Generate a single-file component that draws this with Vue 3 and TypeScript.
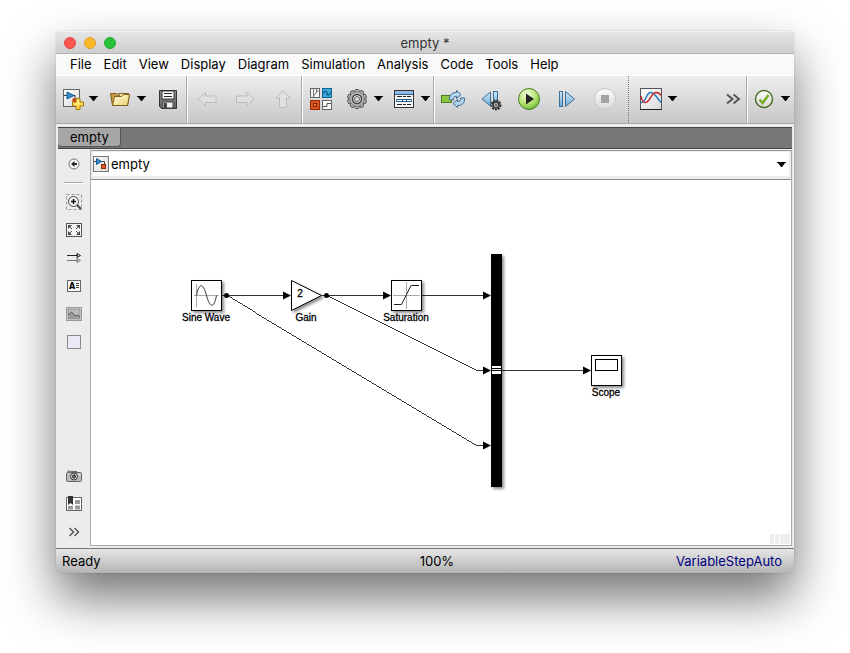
<script setup lang="ts">
import { ref } from 'vue'

const modelName = 'empty'
const menus: string[] = ['File', 'Edit', 'View', 'Display', 'Diagram', 'Simulation', 'Analysis', 'Code', 'Tools', 'Help']

interface Signal {
  id: string
  path: string
  tip: [number, number]
}

const signals: Signal[] = [
  { id: 'sine-gain', path: 'M131 115.5H194', tip: [200, 115.5] },
  { id: 'gain-sat', path: 'M231 115.5H294', tip: [300, 115.5] },
  { id: 'sat-mux', path: 'M331 115.5H394', tip: [400, 115.5] },
  { id: 'gain-mux', path: 'M235.5 115.5L385.5 190.5H394', tip: [400, 190.5] },
  { id: 'sine-mux', path: 'M135.5 115.5L385.5 265.5H394', tip: [400, 265.5] },
  { id: 'mux-scope', path: 'M411 190.5H494', tip: [500, 190.5] },
]

const branches: [number, number][] = [[135.5, 115.5], [235.5, 115.5]]

const labels = [
  { text: 'Sine Wave', x: 115, y: 141 },
  { text: 'Gain', x: 215, y: 141 },
  { text: 'Saturation', x: 315, y: 141 },
  { text: 'Scope', x: 515, y: 216 },
]

const gearTeeth = [0, 36, 72, 108, 144, 180, 216, 252, 288, 324]
const zoom = ref('100%')
</script>

<template>
  <div class="desktop">
    <main class="window">
      <header class="titlebar">
        <div class="lights">
          <button class="light close" aria-label="Close"></button>
          <button class="light minimize" aria-label="Minimize"></button>
          <button class="light zoomer" aria-label="Zoom"></button>
        </div>
        <h1>{{ modelName }} *</h1>
      </header>

      <nav class="menubar">
        <button v-for="menu in menus" :key="menu">{{ menu }}</button>
      </nav>

      <div class="toolbar">
        <div class="group files">
          <div class="split">
            <button class="tool" aria-label="New model">
              <svg viewBox="0 0 24 24">
                <rect x="3.5" y="2.5" width="16" height="17" fill="url(#paper)" stroke="#666" />
                <path d="M4 8.5h4M13 8.5h2v4" stroke="#333" fill="none" />
                <path d="M7 5l7 3.500-7 3.500z" fill="#2f8fd0" stroke="#155a91" />
                <rect x="12.500" y="11.500" width="4" height="4" fill="#c33b12" />
                <path d="M16 11.500h4v3.500h3.500v4H20v3.500h-4V19h-3.500v-4H16z" fill="#ffd64a" stroke="#a87910" />
                <path d="M17 13h1.500v4h-4.500" stroke="#fff3b0" fill="none" />
              </svg>
            </button>
            <button class="drop" aria-label="New options"><svg viewBox="0 0 9 5"><path d="M0 0h9v1H8L5 5H4L1 1H0z" /></svg></button>
          </div>
          <div class="split">
            <button class="tool" aria-label="Open">
              <svg viewBox="0 0 24 24">
                <path d="M2.500 6.500h6l1.500 2h9.500v10H4.500z" fill="#c79a45" stroke="#80601e" />
                <path d="M10.500 6.500h10l1 1-2 11h-4z" fill="#f5e6a8" stroke="#80601e" />
                <path d="M6.500 9.500h7l2-2h6l-2 11h-15z" fill="url(#folder)" stroke="#80601e" />
              </svg>
            </button>
            <button class="drop" aria-label="Open options"><svg viewBox="0 0 9 5"><path d="M0 0h9v1H8L5 5H4L1 1H0z" /></svg></button>
          </div>
          <button class="tool" aria-label="Save">
            <svg viewBox="0 0 24 24">
              <path d="M3.500 3.500h17v18h-15l-2-2z" fill="url(#steel)" stroke="#333" />
              <rect x="6" y="4" width="12" height="8" fill="#fff" stroke="#333" />
              <path d="M8 6.500h8M8 9.500h8" stroke="#222" />
              <rect x="7" y="15" width="10" height="6" fill="#f3f3f3" stroke="#444" />
              <rect x="8" y="16" width="3" height="5" fill="#444" />
            </svg>
          </button>
        </div>

        <div class="group arrows">
          <button class="tool" disabled aria-label="Back">
            <svg viewBox="0 0 24 24"><path class="faint" d="M3.500 12l7-6.500V9h10.500v6.500H10.500V19z" /></svg>
          </button>
          <button class="tool" disabled aria-label="Forward">
            <svg viewBox="0 0 24 24"><path class="faint" d="M21 12l-7-6.500V9H3.500v6.500H14V19z" /></svg>
          </button>
          <button class="tool" disabled aria-label="Up to parent">
            <svg viewBox="0 0 24 24"><path class="faint" d="M12 3.500l7 7.500h-3.500v9.500h-7V11H5z" /></svg>
          </button>
        </div>

        <div class="group model">
          <button class="tool wide" aria-label="Library browser">
            <svg viewBox="0 0 24 24">
              <rect x="1.500" y="1.500" width="9" height="9" fill="#f4f4f4" stroke="#666" />
              <path d="M4.500 2v8M4.500 9l5-6M7.500 6V2" stroke="#777" fill="none" />
              <rect x="13.500" y="1.500" width="9" height="9" fill="#35a8dd" stroke="#17648c" />
              <path d="M14 7l2-3 2 1v3h2l2-3" stroke="#0b4d72" fill="none" />
              <rect x="1.500" y="13.500" width="9" height="9" fill="#df5517" stroke="#8d3009" />
              <rect x="4.500" y="16.500" width="3" height="3" fill="#f07a3c" stroke="#7c2806" />
              <rect x="13.500" y="13.500" width="9" height="9" fill="#fafafa" stroke="#666" />
              <path d="M14 19.500h4v-3h4" stroke="#555" fill="none" />
            </svg>
          </button>
          <div class="split">
            <button class="tool" aria-label="Model configuration">
              <svg viewBox="0 0 24 24">
                <rect v-for="a in gearTeeth" :key="a" x="10" y="2.500" width="4" height="4" rx="1" fill="#c4c4c4" stroke="#555" :transform="`rotate(${a} 12 12)`" />
                <circle cx="12" cy="12" r="7.500" fill="#b4b4b4" stroke="#777" />
                <circle cx="12" cy="12" r="4.500" fill="#e4e4e4" stroke="#444" stroke-width="1.500" />
                <circle cx="12" cy="12" r="2.500" fill="#ddd" stroke="#666" />
              </svg>
            </button>
            <button class="drop" aria-label="Configuration options"><svg viewBox="0 0 9 5"><path d="M0 0h9v1H8L5 5H4L1 1H0z" /></svg></button>
          </div>
          <div class="split">
            <button class="tool" aria-label="Model explorer">
              <svg viewBox="0 0 24 24">
                <rect x="2.500" y="3.500" width="19" height="17" fill="#f6f6f6" stroke="#333" />
                <rect x="3" y="4" width="18" height="3" fill="#8ebae4" />
                <path d="M3 7.500h18" stroke="#2b5789" />
                <path d="M5 9.500h5M11 9.500h3M15 9.500h4M5 17.500h5M11 17.500h3M15 17.500h4" stroke="#222" />
                <path d="M4.500 12.500h15v2h-15zM10.500 12v3M14.500 12v3" fill="#fff" stroke="#1d5e92" />
              </svg>
            </button>
            <button class="drop" aria-label="Explorer options"><svg viewBox="0 0 9 5"><path d="M0 0h9v1H8L5 5H4L1 1H0z" /></svg></button>
          </div>
        </div>

        <div class="group run">
          <button class="tool" aria-label="Update diagram">
            <svg viewBox="0 0 24 24">
              <rect x="0.500" y="8.500" width="10" height="7" fill="#8cc540" stroke="#4c7a1a" />
              <path d="M8.500 13c-.5-5 2.500-7.500 7-7.500V3.500l4.500 4-4.500 4V9.500c-2.500 0-3.500 1-3 3.500z" fill="#b5d5ee" stroke="#3a6890" />
              <path d="M23.500 11c.5 5-2.500 7.500-7 7.500v2l-4.500-4 4.500-4v2c2.500 0 3.500-1 3-3.500z" fill="#b5d5ee" stroke="#3a6890" />
            </svg>
          </button>
          <button class="tool" aria-label="Step back options">
            <svg viewBox="0 0 24 24">
              <path d="M11.500 5v14L3 12z" fill="url(#sky)" stroke="#3c7097" />
              <rect x="14.500" y="4.500" width="4" height="13" fill="url(#sky)" stroke="#3c7097" />
              <circle cx="17" cy="18" r="4.500" fill="none" stroke="#333" stroke-width="2" stroke-dasharray="2 1" />
              <circle cx="17" cy="18" r="3" fill="#ccc" stroke="#333" stroke-width="1.500" />
              <circle cx="17" cy="18" r="1" fill="#fff" stroke="#444" />
            </svg>
          </button>
          <button class="tool" aria-label="Run">
            <svg viewBox="0 0 24 24">
              <circle cx="12" cy="12" r="10.500" fill="url(#lime)" stroke="#4c7d2b" />
              <path d="M9 6.500l8 5.500-8 5.500z" fill="#222" />
            </svg>
          </button>
          <button class="tool" aria-label="Step forward">
            <svg viewBox="0 0 24 24">
              <rect x="4.500" y="4.500" width="3" height="15" fill="url(#sky)" stroke="#3c7097" />
              <path d="M10.500 4.500v15l9-7.500z" fill="url(#sky)" stroke="#3c7097" />
            </svg>
          </button>
          <button class="tool" disabled aria-label="Stop">
            <svg viewBox="0 0 24 24">
              <circle cx="12" cy="12" r="10.500" fill="url(#mist)" stroke="#c6c6c6" />
              <rect x="8" y="8" width="8" height="8" fill="#a3a3a3" />
            </svg>
          </button>
        </div>

        <div class="group inspect">
          <div class="split">
            <button class="tool" aria-label="Simulation data inspector">
              <svg viewBox="0 0 24 24">
                <rect x="1.500" y="1.500" width="21" height="21" fill="url(#paper)" stroke="#555" />
                <path d="M1 22.500h22" stroke="#222" />
                <path d="M2 15.500c5 1 5-10 9.500-10 4.500 0 6 5 10.500 10" fill="none" stroke="#2c7cc0" stroke-width="1.500" />
                <path d="M2 9c1 6 3 6.500 4.500 6.500C11 15.500 12 5.500 17 5.500c2 0 4 1 5 3" fill="none" stroke="#c5282c" stroke-width="1.500" />
              </svg>
            </button>
            <button class="drop" aria-label="Inspector options"><svg viewBox="0 0 9 5"><path d="M0 0h9v1H8L5 5H4L1 1H0z" /></svg></button>
          </div>
          <button class="tool" aria-label="More tools">
            <svg viewBox="0 0 24 24"><path d="M6 7.500l5.500 4.500L6 16.500M12.500 7.500L18 12l-5.500 4.500" fill="none" stroke="#555" stroke-width="2" /></svg>
          </button>
        </div>

        <div class="group check">
          <div class="split">
            <button class="tool" aria-label="Model advisor">
              <svg viewBox="0 0 24 24">
                <circle cx="12" cy="12" r="8.500" fill="url(#mist)" stroke="#4c7029" stroke-width="1.500" />
                <path d="M7.500 12.500l3 3.500L16.500 8" fill="none" stroke="#79ad2c" stroke-width="2.500" />
              </svg>
            </button>
            <button class="drop" aria-label="Advisor options"><svg viewBox="0 0 9 5"><path d="M0 0h9v1H8L5 5H4L1 1H0z" /></svg></button>
          </div>
        </div>
      </div>

      <div class="tabs">
        <button class="tab">{{ modelName }}</button>
      </div>

      <div class="workspace">
        <aside class="palette">
          <button aria-label="Hide browser">
            <svg viewBox="0 0 16 16">
              <circle cx="8" cy="8" r="5" fill="#f8f8f8" stroke="#777" />
              <path d="M11 8H6" stroke="#222" stroke-width="2" />
              <path d="M8.500 5v6L5 8z" fill="#222" />
            </svg>
          </button>
          <hr />
          <button aria-label="Zoom">
            <svg viewBox="0 0 16 16">
              <rect x="0.500" y="0.500" width="15" height="15" fill="none" stroke="#999" stroke-dasharray="3 2" />
              <circle cx="7.500" cy="7.500" r="5" fill="#f4f4f4" stroke="#444" />
              <path d="M5 7.500h5M7.500 5v5" stroke="#111" stroke-width="1.500" />
              <path d="M11 11l4 4" stroke="#444" stroke-width="2" />
            </svg>
          </button>
          <button aria-label="Fit to view">
            <svg viewBox="0 0 16 16">
              <rect x="0.500" y="1.500" width="15" height="13" fill="#f4f4f4" stroke="#555" />
              <path d="M2 3h4L2 7zM14 3h-4l4 4zM2 13h4L2 9zM14 13h-4l4-4z" fill="#444" />
              <path d="M3 4l3 3M13 4l-3 3M3 12l3-3M13 12l-3-3" stroke="#444" />
            </svg>
          </button>
          <button aria-label="Toggle signal style">
            <svg viewBox="0 0 16 16">
              <path d="M1 5.500h11M11 3.500l3.500 2-3.500 2z" fill="none" stroke="#222" />
              <path d="M1 10.500h11M11 8.500l3.500 2-3.500 2z" fill="none" stroke="#777" />
            </svg>
          </button>
          <button aria-label="Annotation">
            <svg viewBox="0 0 16 16">
              <rect x="1.500" y="2.500" width="13" height="11" fill="#f8f8f8" stroke="#666" />
              <text x="3" y="11" class="glyph">A</text>
              <path d="M10 5.500h3M10 7.500h3M10 9.500h3" stroke="#444" />
            </svg>
          </button>
          <button aria-label="Image">
            <svg viewBox="0 0 16 16">
              <rect x="0.500" y="1.500" width="15" height="13" fill="#f4f4f4" stroke="#999" />
              <rect x="2" y="3" width="12" height="10" fill="#bbb" stroke="#888" />
              <path d="M2.500 9l3-3 4 4 2-1 2 2v2h-11z" fill="#999" />
              <path d="M2 9l3.500-3 4 4 2-1 2.500 2" fill="none" stroke="#555" />
            </svg>
          </button>
          <button aria-label="Area">
            <svg viewBox="0 0 16 16"><rect x="1.500" y="1.500" width="13" height="13" fill="#e9e9f7" stroke="#888" /></svg>
          </button>
          <span class="spacer"></span>
          <button aria-label="Screenshot">
            <svg viewBox="0 0 16 16">
              <path d="M5 3.500h6" stroke="#666" />
              <rect x="0.500" y="4.500" width="15" height="9" rx="1" fill="#bbb" stroke="#666" />
              <path d="M1.500 2.500h3v2h-3z" fill="#777" />
              <circle cx="8" cy="8.500" r="3.500" fill="#ccc" stroke="#444" />
              <circle cx="8" cy="8.500" r="1.500" fill="#777" stroke="#222" />
              <path d="M12.500 6.500h2" stroke="#fff" />
            </svg>
          </button>
          <button aria-label="Bookmarks">
            <svg viewBox="0 0 16 16">
              <rect x="0.500" y="1.500" width="15" height="13" fill="#fff" stroke="#666" />
              <path d="M9 4h5v4H9zM9 9.500h5v4H9zM2 10h5v3.500H2z" fill="#999" />
              <path d="M2 0h5v9L4.500 7 2 9z" fill="#333" />
            </svg>
          </button>
          <button aria-label="More">
            <svg viewBox="0 0 16 16"><path d="M3.500 4l4 4-4 4M8.500 4l4 4-4 4" fill="none" stroke="#555" stroke-width="1.500" /></svg>
          </button>
        </aside>

        <section class="editor">
          <div class="address">
            <button class="crumb">
              <svg viewBox="0 0 16 16">
                <rect x="0.500" y="0.500" width="15" height="15" fill="url(#paper)" stroke="#777" />
                <path d="M1 5.500h3M8 5.500h3.500V9" stroke="#444" fill="none" />
                <path d="M3.500 2.500l5 3-5 3z" fill="#2f8fd0" stroke="#155a91" />
                <rect x="8.500" y="8.500" width="4" height="4" fill="#e0562a" stroke="#8d3009" />
              </svg>
              {{ modelName }}
            </button>
            <button class="drop" aria-label="Model path"><svg viewBox="0 0 9 5"><path d="M0 0h9v1H8L5 5H4L1 1H0z" /></svg></button>
          </div>

          <div class="canvas">
            <svg class="diagram" width="600" height="340" viewBox="0 0 600 340" role="img" aria-label="Block diagram">
              <defs>
                <filter id="cast" x="-20%" y="-20%" width="150%" height="150%">
                  <feDropShadow dx="2" dy="2" stdDeviation="1.500" flood-color="#000" flood-opacity="0.45" />
                </filter>
                <filter id="cast-bar" x="-50%" y="-5%" width="220%" height="110%">
                  <feDropShadow dx="2" dy="2" stdDeviation="1.500" flood-color="#000" flood-opacity="0.45" />
                </filter>
              </defs>

              <rect x="100.500" y="100.500" width="30" height="30" class="block" />
              <path d="M103 115.500h25M105.500 104v23" stroke="#aaa" />
              <path d="M105.500 115.500C108 102.500 112 102.500 115.500 115.500S123 128.500 125.500 115.500" class="trace" />

              <path d="M200.500 100.500L230.500 115.500 200.500 130.500z" class="block" />
              <text x="209" y="117" class="value">2</text>

              <rect x="300.500" y="100.500" width="30" height="30" class="block" />
              <path d="M302 115.500h27M315.500 102v27" stroke="#aaa" />
              <path d="M303 124.500h7.500l9.500-19h8" class="trace dark" />

              <rect x="400" y="74" width="11" height="233" class="bar" />
              <rect x="401" y="186" width="9" height="8" fill="#fff" />
              <path d="M401 188.500h9M401 190.500h9" stroke="#000" />

              <rect x="500.500" y="175.500" width="30" height="30" class="block" />
              <rect x="504.500" y="179.500" width="22" height="11" fill="#fff" stroke="#000" />

              <g v-for="s in signals" :key="s.id">
                <path :d="s.path" class="wire" />
                <path :d="`M${s.tip[0]} ${s.tip[1]}l-8 -4v8z`" />
              </g>
              <circle v-for="(b, i) in branches" :key="i" :cx="b[0]" :cy="b[1]" r="2.500" />
              <text v-for="l in labels" :key="l.text" :x="l.x" :y="l.y" class="label">{{ l.text }}</text>
            </svg>
            <div class="grip"><i></i><i></i><i class="long"></i></div>
          </div>
        </section>
      </div>

      <footer class="status">
        <span>Ready</span>
        <span>{{ zoom }}</span>
        <a href="#solver">VariableStepAuto</a>
      </footer>
    </main>

    <svg class="paints" aria-hidden="true">
      <defs>
        <linearGradient id="paper" x2="1" y2="1"><stop stop-color="#fff" /><stop offset="1" stop-color="#d9d9d9" /></linearGradient>
        <linearGradient id="folder" x2="1" y2="1"><stop stop-color="#fffbe0" /><stop offset="1" stop-color="#ecd070" /></linearGradient>
        <linearGradient id="steel" x2="0" y2="1"><stop stop-color="#8d8d8d" /><stop offset="1" stop-color="#5f5f5f" /></linearGradient>
        <linearGradient id="sky" x2="0" y2="1"><stop stop-color="#d3e9f8" /><stop offset="1" stop-color="#69a9d8" /></linearGradient>
        <linearGradient id="mist" x2="0" y2="1"><stop stop-color="#fcfcfc" /><stop offset="1" stop-color="#dadada" /></linearGradient>
        <radialGradient id="lime" cx=".4" cy=".3" r=".75"><stop stop-color="#f6ffe4" /><stop offset=".6" stop-color="#b4e26d" /><stop offset="1" stop-color="#62b52c" /></radialGradient>
      </defs>
    </svg>
  </div>
</template>

<style>
body {
  background: #fff;
}
</style>

<style scoped>
.desktop {
  box-sizing: border-box;
  display: flex;
  min-height: 100vh;
  padding: 31px 56px 80px;
  overflow: hidden;
  font: 13px/16px Inter, "Liberation Sans", sans-serif;
  color: #000;
}
.paints {
  position: absolute;
  width: 0;
  height: 0;
}
.window {
  flex: 1;
  min-width: 0;
  display: flex;
  flex-direction: column;
  border-radius: 5px;
  overflow: hidden;
  background: #ececec;
  box-shadow: 0 0 1px rgba(0, 0, 0, 0.5), 0 25px 50px rgba(0, 0, 0, 0.55);
}
button {
  padding: 0;
  border: 0;
  background: none;
  font: inherit;
  color: inherit;
}
svg {
  display: block;
}
.titlebar {
  box-sizing: border-box;
  display: grid;
  grid-template-columns: 1fr auto 1fr;
  align-items: center;
  height: 23px;
  padding: 1px 8px 0;
  border-top: 1px solid #f4f4f4;
  border-bottom: 1px solid #b1b1b1;
  background: linear-gradient(#e6e6e6, #cecece);
}
.titlebar h1 {
  margin: 0;
  font-size: 13px;
  font-weight: 400;
  color: #333;
}
.lights {
  display: flex;
  gap: 8px;
}
.light {
  box-sizing: border-box;
  width: 12px;
  height: 12px;
  border: 1px solid;
  border-radius: 50%;
}
.close {
  background: #fc5650;
  border-color: #df4744;
}
.minimize {
  background: #fdb827;
  border-color: #de9f34;
}
.zoomer {
  background: #27c138;
  border-color: #23a931;
}
.menubar {
  box-sizing: border-box;
  display: flex;
  gap: 12px;
  align-items: center;
  height: 21px;
  padding: 0 14px 2px;
  background: #f9f9f9;
}
.toolbar {
  box-sizing: border-box;
  display: flex;
  height: 49px;
  border-top: 1px solid #fff;
  border-bottom: 1px solid #aaa;
  background: linear-gradient(#eee, #c7c7c7);
}
.group {
  display: flex;
  align-items: center;
  padding-bottom: 2px;
}
.group + .group {
  border-left: 1px solid #fff;
}
.files,
.arrows,
.model,
.inspect {
  border-right: 1px solid #a8a8a8;
}
.files {
  gap: 6px;
  padding-left: 3px;
  padding-right: 5px;
}
.arrows {
  gap: 12px;
  padding-left: 6px;
  padding-right: 5px;
}
.model {
  gap: 5px;
}
.run {
  gap: 12px;
  padding-left: 5px;
  padding-right: 10px;
}
.group.inspect {
  flex: 1;
  justify-content: space-between;
  padding-left: 9px;
  border-left: 1px dotted #777;
}
.check {
  padding-left: 3px;
  padding-right: 1px;
}
.split {
  display: flex;
}
.tool {
  display: grid;
  place-items: center;
  width: 26px;
  height: 26px;
}
.tool.wide {
  width: 36px;
}
.tool svg {
  width: 24px;
  height: 24px;
}
.faint {
  fill: #e0e0e0;
  stroke: #bcbcbc;
}
.drop {
  display: grid;
  place-items: center;
  width: 16px;
}
.drop svg {
  width: 9px;
  height: 5px;
}
.tabs {
  display: flex;
  align-items: flex-start;
  height: 20px;
  margin: 3px 2px 0;
  border-top: 1px solid #444;
  border-bottom: 1px solid #444;
  background: #777;
}
.tab {
  height: 19px;
  padding: 0 11px 0 12px;
  border-right: 1px solid #555;
  border-bottom: 1px solid #555;
  border-radius: 0 0 4px 4px;
  background: #a6a6a6;
}
.workspace {
  flex: 1;
  display: flex;
  padding: 1px 2px 2px 0;
}
.palette {
  display: flex;
  flex-direction: column;
  align-items: center;
  width: 34px;
  padding-left: 1px;
  box-sizing: border-box;
}
.palette button {
  display: grid;
  place-items: center;
  width: 28px;
  height: 28px;
}
.palette svg {
  width: 16px;
  height: 16px;
}
.palette hr {
  width: 19px;
  margin: 4px 0;
  border: 0;
  border-top: 1px solid #aaa;
  border-bottom: 1px solid #fff;
}
.spacer {
  flex: 1;
}
.glyph {
  font: 700 8px "DejaVu Sans", sans-serif;
}
.editor {
  flex: 1;
  min-width: 0;
  display: flex;
  flex-direction: column;
  border: 1px solid #aaa;
  border-top-color: #999;
}
.address {
  display: flex;
  justify-content: space-between;
  align-items: center;
  height: 24px;
  border: 2px solid #ececec;
  border-top-width: 1px;
  border-bottom-width: 3px;
  background: #fff;
}
.crumb {
  display: flex;
  align-items: center;
  gap: 2px;
}
.crumb svg {
  width: 16px;
  height: 16px;
}
.canvas {
  position: relative;
  flex: 1;
  border-top: 1px solid #888;
  background: #fff;
}
.diagram {
  max-width: 100%;
}
.block {
  fill: #fff;
  stroke: #000;
  filter: url(#cast);
}
.bar {
  filter: url(#cast-bar);
}
.trace {
  fill: none;
  stroke: #333;
}
.trace.dark {
  stroke: #222;
}
.wire {
  fill: none;
  stroke: #000;
  stroke-width: 0.8;
  shape-rendering: crispEdges;
}
.label,
.value {
  font: 10px "Liberation Sans", sans-serif;
  text-anchor: middle;
  stroke: #000;
  stroke-width: 0.3px;
}
.grip {
  position: absolute;
  right: 1px;
  bottom: 1px;
  display: flex;
  gap: 1px;
}
.grip i {
  width: 4px;
  height: 10px;
  background: #eee;
}
.grip .long {
  width: 10px;
}
.status {
  box-sizing: border-box;
  display: grid;
  grid-template-columns: 12fr auto 11fr;
  align-items: center;
  height: 25px;
  padding: 0 12px 1px 6px;
  border-top: 1px solid #777;
  background: linear-gradient(#e6e6e6, #b4b4b4);
}
.status a {
  justify-self: end;
  color: #00007f;
  text-decoration: none;
}
</style>
